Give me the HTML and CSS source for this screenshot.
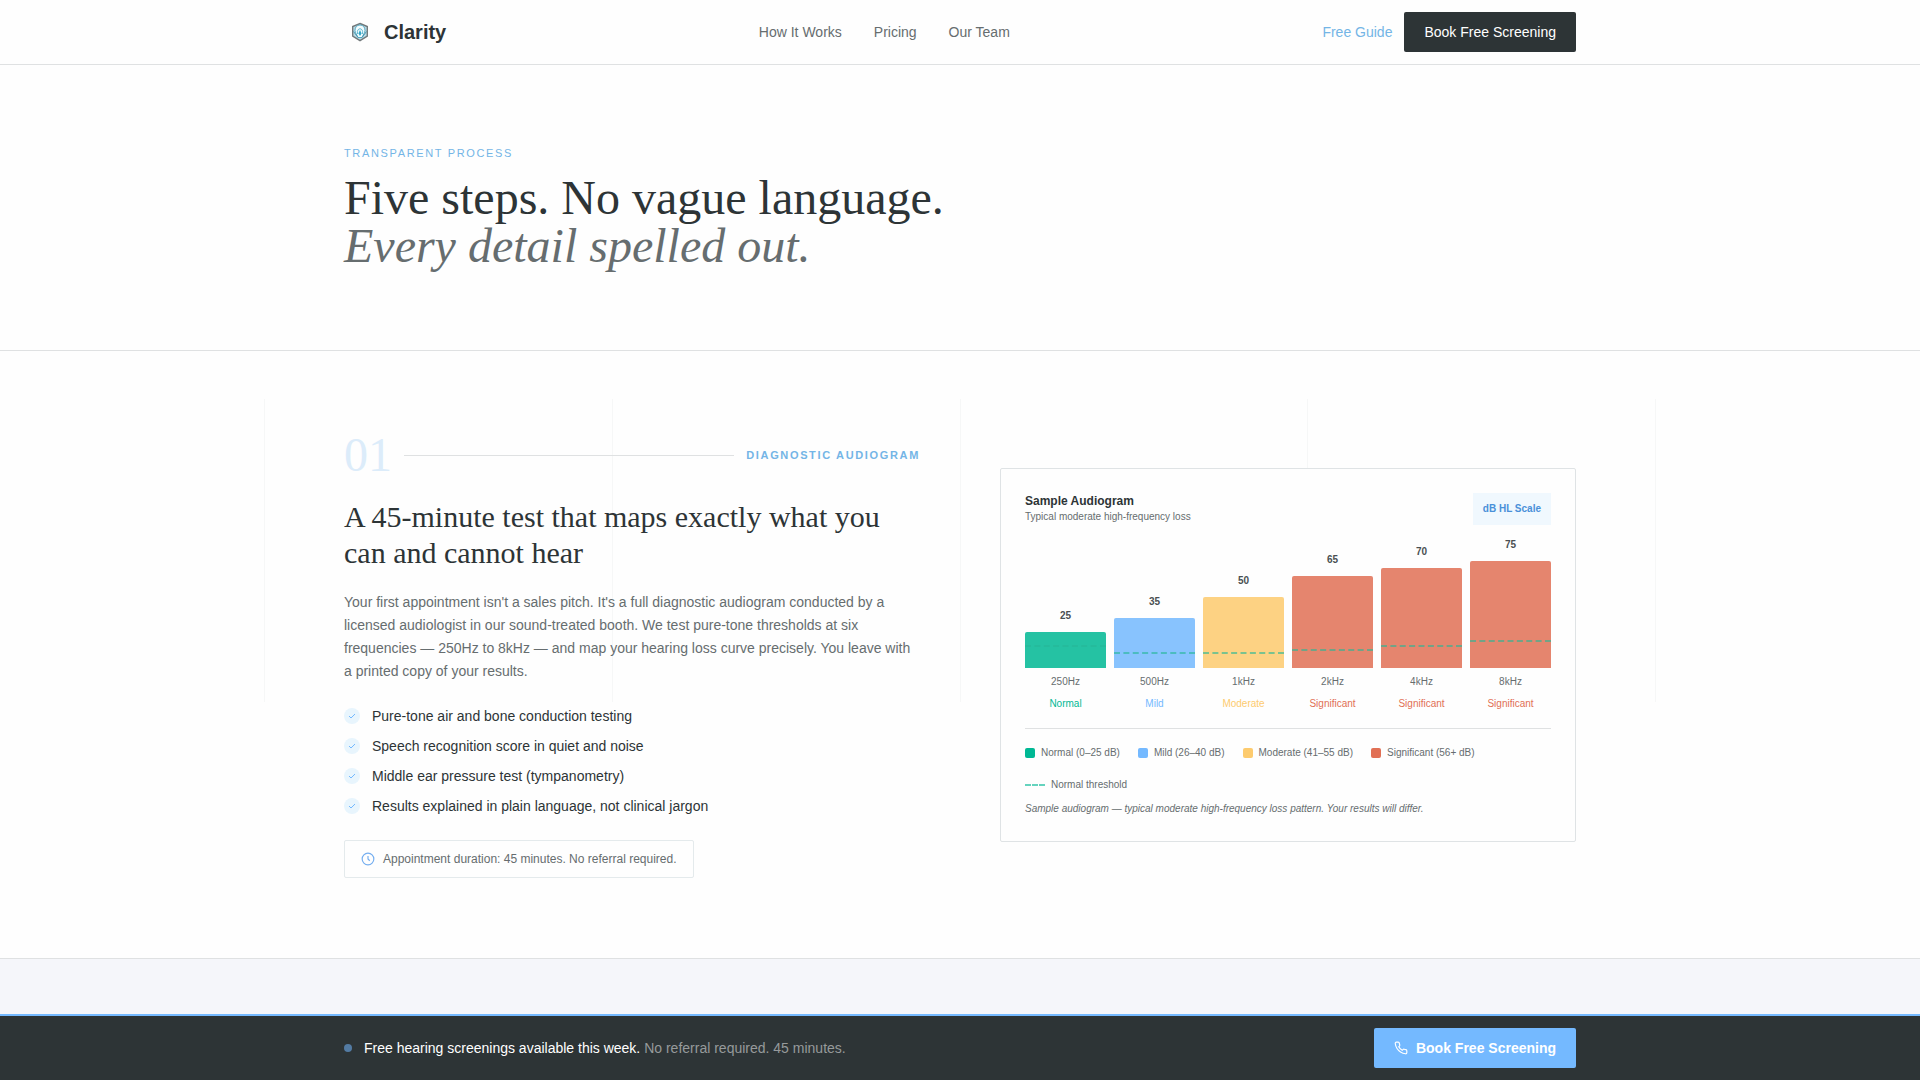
FILE: index.html
```html
<!DOCTYPE html>
<html lang="en">
<head>
    <meta charset="UTF-8">
    <meta name="viewport" content="width=device-width, initial-scale=1.0">
    <title>Clarity - How It Works</title>
    <link rel="stylesheet" href="styles.css">
</head>
<body>
    <header class="site-header">
        <div class="container header-inner">
            <a href="#" class="logo">
                <svg class="logo-mark" viewBox="0 0 32 32" aria-hidden="true">
                    <path d="M16 7.500l7.300 3v9.500L16 24.700 8.700 20v-9.500z" fill="#b9dbe6" stroke="#73797b" stroke-width="1.400"/>
                    <path d="M11 14.500c0-3.500 2-5.500 5-5.500s5 2 5 5.500c0 2.500-2 4-3 7h-4c-1-3-3-4.500-3-7z" fill="#f2fcfe" stroke="#5aa9c2" stroke-width="1"/>
                    <path d="M13.500 18c-1.500-7 6.500-7 5 0" fill="none" stroke="#63b9d2" stroke-width="1"/>
                    <path d="M16 14l1.600 3.500L16 20l-1.600-2.500z" fill="#35a7c7"/>
                    <path d="M9.500 15.500l4.500 6M22.500 15.500l-4.500 6" fill="none" stroke="#4c98b0" stroke-width="1"/>
                </svg>
                <span>Clarity</span>
            </a>
            <nav class="main-nav">
                <a href="#steps">How It Works</a>
                <a href="#pricing">Pricing</a>
                <a href="#team">Our Team</a>
            </nav>
            <div class="header-actions">
                <a href="#guide" class="guide-link">Free Guide</a>
                <a href="#book" class="btn btn-dark">Book Free Screening</a>
            </div>
        </div>
    </header>

    <main>
        <section class="hero">
            <div class="container">
                <p class="eyebrow">Transparent Process</p>
                <h1>Five steps. No vague language.<br><em>Every detail spelled out.</em></h1>
            </div>
        </section>

        <section class="step" id="steps">
            <div class="grid-lines" aria-hidden="true"><i></i><i></i><i></i><i></i><i></i></div>
            <div class="container step-grid">
                <div class="step-text">
                    <div class="step-head">
                        <span class="step-number">01</span>
                        <span class="step-rule"></span>
                        <span class="step-label">Diagnostic Audiogram</span>
                    </div>
                    <h2>A 45-minute test that maps exactly what you can and cannot hear</h2>
                    <p class="step-body">Your first appointment isn't a sales pitch. It's a full diagnostic audiogram conducted by a licensed audiologist in our sound-treated booth. We test pure-tone thresholds at six frequencies — 250Hz to 8kHz — and map your hearing loss curve precisely. You leave with a printed copy of your results.</p>
                    <ul class="checks">
                        <li><svg viewBox="0 0 16 16" aria-hidden="true"><circle cx="8" cy="8" r="8"/><path d="M5 8l2 2 4-4"/></svg>Pure-tone air and bone conduction testing</li>
                        <li><svg viewBox="0 0 16 16" aria-hidden="true"><circle cx="8" cy="8" r="8"/><path d="M5 8l2 2 4-4"/></svg>Speech recognition score in quiet and noise</li>
                        <li><svg viewBox="0 0 16 16" aria-hidden="true"><circle cx="8" cy="8" r="8"/><path d="M5 8l2 2 4-4"/></svg>Middle ear pressure test (tympanometry)</li>
                        <li><svg viewBox="0 0 16 16" aria-hidden="true"><circle cx="8" cy="8" r="8"/><path d="M5 8l2 2 4-4"/></svg>Results explained in plain language, not clinical jargon</li>
                    </ul>
                    <div class="note">
                        <svg viewBox="0 0 24 24" aria-hidden="true"><circle cx="12" cy="12" r="10"/><path d="M12 7v5l3 3"/></svg>
                        <span>Appointment duration: 45 minutes. No referral required.</span>
                    </div>
                </div>

                <div class="card">
                    <div class="card-head">
                        <div>
                            <h3>Sample Audiogram</h3>
                            <p>Typical moderate high-frequency loss</p>
                        </div>
                        <span class="chip">dB HL Scale</span>
                    </div>

                    <div class="chart">
                        <div class="col normal">
                            <span class="value">25</span>
                            <div class="bar" style="height: 36px"><span class="threshold" style="bottom: 21px"></span></div>
                            <span class="freq">250Hz</span>
                            <span class="status">Normal</span>
                        </div>
                        <div class="col mild">
                            <span class="value">35</span>
                            <div class="bar" style="height: 50px"><span class="threshold" style="bottom: 14px"></span></div>
                            <span class="freq">500Hz</span>
                            <span class="status">Mild</span>
                        </div>
                        <div class="col moderate">
                            <span class="value">50</span>
                            <div class="bar" style="height: 71px"><span class="threshold" style="bottom: 14px"></span></div>
                            <span class="freq">1kHz</span>
                            <span class="status">Moderate</span>
                        </div>
                        <div class="col significant">
                            <span class="value">65</span>
                            <div class="bar" style="height: 92px"><span class="threshold" style="bottom: 17px"></span></div>
                            <span class="freq">2kHz</span>
                            <span class="status">Significant</span>
                        </div>
                        <div class="col significant">
                            <span class="value">70</span>
                            <div class="bar" style="height: 100px"><span class="threshold" style="bottom: 21px"></span></div>
                            <span class="freq">4kHz</span>
                            <span class="status">Significant</span>
                        </div>
                        <div class="col significant">
                            <span class="value">75</span>
                            <div class="bar" style="height: 107px"><span class="threshold" style="bottom: 26px"></span></div>
                            <span class="freq">8kHz</span>
                            <span class="status">Significant</span>
                        </div>
                    </div>

                    <ul class="legend">
                        <li class="normal"><span class="swatch"></span>Normal (0–25 dB)</li>
                        <li class="mild"><span class="swatch"></span>Mild (26–40 dB)</li>
                        <li class="moderate"><span class="swatch"></span>Moderate (41–55 dB)</li>
                        <li class="significant"><span class="swatch"></span>Significant (56+ dB)</li>
                        <li><span class="dash"></span>Normal threshold</li>
                    </ul>
                    <p class="caption">Sample audiogram — typical moderate high-frequency loss pattern. Your results will differ.</p>
                </div>
            </div>
        </section>

        <section class="next-step"></section>
    </main>

    <div class="cta-bar">
        <div class="container cta-inner">
            <p class="cta-text"><span class="dot"></span><span>Free hearing screenings available this week. <span class="muted">No referral required. 45 minutes.</span></span></p>
            <a href="#book" class="btn btn-blue">
                <svg viewBox="0 0 24 24" aria-hidden="true"><path d="M22 16.920v3a2 2 0 0 1-2.180 2 19.790 19.790 0 0 1-8.630-3.070 19.500 19.500 0 0 1-6-6 19.790 19.790 0 0 1-3.070-8.670A2 2 0 0 1 4.110 2h3a2 2 0 0 1 2 1.720c.127.960.361 1.903.700 2.810a2 2 0 0 1-.450 2.110L8.090 9.910a16 16 0 0 0 6 6l1.270-1.270a2 2 0 0 1 2.110-.450c.907.339 1.850.573 2.810.700A2 2 0 0 1 22 16.920z"/></svg>
                Book Free Screening
            </a>
        </div>
    </div>
</body>
</html>
```
FILE: styles.css
```css
/* General styles */
* {
    box-sizing: border-box;
    margin: 0;
    padding: 0;
}

body {
    min-height: 100vh;
    display: flex;
    flex-direction: column;
    font-family: "Liberation Sans", Arial, sans-serif;
    font-size: 14px;
    line-height: 20px;
    color: #2d3436;
    background-color: #fefefe;
}

main {
    flex: 1;
    display: flex;
    flex-direction: column;
}

a {
    text-decoration: none;
    color: inherit;
}

ul {
    list-style: none;
}

.container {
    width: 100%;
    max-width: 1280px;
    margin: 0 auto;
    padding: 0 24px;
}

.btn {
    display: inline-flex;
    align-items: center;
    gap: 8px;
    padding: 10px 20px;
    border-radius: 2px;
    color: #fff;
}

.btn-dark {
    background-color: #2d3436;
}

.btn-blue {
    background-color: #74b9ff;
    font-weight: bold;
}

.btn-blue svg {
    width: 14px;
    height: 14px;
    fill: none;
    stroke: #fff;
    stroke-width: 2;
}

/* Header */
.site-header {
    position: sticky;
    top: 0;
    z-index: 10;
    background-color: #fefefe;
    border-bottom: 1px solid #dfe1e2;
}

.header-inner {
    min-height: 64px;
    display: flex;
    justify-content: space-between;
    align-items: center;
}

.logo {
    display: flex;
    align-items: center;
    gap: 8px;
    font-size: 20px;
    font-weight: bold;
}

.logo-mark {
    width: 32px;
    height: 32px;
}

.main-nav {
    display: flex;
    gap: 32px;
    color: #666d6f;
}

.header-actions {
    display: flex;
    align-items: center;
    gap: 12px;
}

.guide-link {
    color: #74b5e6;
}

/* Hero */
.hero {
    padding: 80px 0;
    border-bottom: 1px solid #dfe1e2;
}

.eyebrow {
    margin-bottom: 12px;
    font-size: 11px;
    line-height: 17px;
    letter-spacing: 0.15em;
    text-transform: uppercase;
    color: #74b5e6;
}

h1,
h2,
.step-number {
    font-family: "Liberation Serif", "Times New Roman", serif;
    font-weight: normal;
}

h1 {
    font-size: 48px;
    line-height: 48px;
}

h1 em {
    color: #666d6f;
}

/* Step */
.step {
    position: relative;
    padding: 80px 0;
    border-bottom: 1px solid #dfe1e2;
}

.grid-lines {
    position: absolute;
    inset: 48px 264px 256px;
    display: flex;
    justify-content: space-between;
}

.grid-lines i {
    width: 1px;
    background-color: #f6f7f7;
}

.step-grid {
    position: relative;
    display: grid;
    grid-template-columns: 1fr 1fr;
    gap: 80px;
    align-items: center;
}

.step-head {
    display: flex;
    align-items: center;
    gap: 12px;
    margin-bottom: 20px;
}

.step-number {
    font-size: 48px;
    line-height: 48px;
    color: #dcecfa;
}

.step-rule {
    flex: 1;
    height: 1px;
    background-color: #dfe1e2;
}

.step-label {
    font-size: 11px;
    font-weight: bold;
    letter-spacing: 0.15em;
    text-transform: uppercase;
    color: #74b5e6;
}

h2 {
    margin-bottom: 20px;
    font-size: 30px;
    line-height: 36px;
}

.step-body {
    margin-bottom: 23px;
    line-height: 23px;
    color: #666d6f;
}

.checks {
    display: flex;
    flex-direction: column;
    gap: 10px;
    margin-bottom: 24px;
}

.checks li {
    display: flex;
    align-items: center;
    gap: 12px;
}

.checks svg {
    width: 16px;
    height: 16px;
    fill: none;
    stroke: #74b9ff;
}

.checks circle {
    fill: #e8f5fd;
    stroke: none;
}

.note {
    display: flex;
    width: fit-content;
    align-items: center;
    gap: 8px;
    padding: 10px 16px;
    border: 1px solid #e4eaec;
    border-radius: 2px;
    font-size: 12px;
    line-height: 16px;
    color: #666d6f;
}

.note svg {
    width: 14px;
    height: 14px;
    fill: none;
    stroke: #74aef0;
    stroke-width: 2;
}

/* Audiogram card */
.card {
    padding: 24px;
    border: 1px solid #dfe3e5;
    border-radius: 2px;
    background-color: #fefefe;
    font-size: 10px;
    line-height: 16px;
    color: #666d6f;
}

.card-head {
    display: flex;
    justify-content: space-between;
    align-items: flex-start;
    margin-bottom: 12px;
}

.card h3 {
    font-size: 12px;
    line-height: 16px;
    color: #2d3436;
}

.chip {
    padding: 8px 10px;
    background-color: #f0f8fe;
    font-weight: bold;
    color: #4a90d9;
}

.chart {
    display: flex;
    align-items: flex-end;
    gap: 8px;
    padding-bottom: 16px;
    border-bottom: 1px solid #dfe1e2;
}

.col {
    flex: 1;
    display: flex;
    flex-direction: column;
    text-align: center;
}

.value {
    margin-bottom: 8px;
    font-weight: bold;
    color: #4a5052;
}

.bar {
    position: relative;
    border-radius: 2px 2px 0 0;
    opacity: 0.85;
}

.normal .bar,
.normal .swatch {
    background-color: #00b894;
}

.mild .bar,
.mild .swatch {
    background-color: #74b9ff;
}

.moderate .bar,
.moderate .swatch {
    background-color: #fdcb6e;
}

.significant .bar,
.significant .swatch {
    background-color: #e17055;
}

.threshold {
    position: absolute;
    left: 0;
    right: 0;
    border-top: 2px dashed #00ac86;
    opacity: 0.6;
}

.freq {
    margin: 6px 0;
}

.normal .status {
    color: #00b894;
}

.mild .status {
    color: #74b9ff;
}

.moderate .status {
    color: #fdcb6e;
}

.significant .status {
    color: #e17055;
}

.legend {
    display: flex;
    flex-wrap: wrap;
    gap: 16px 18px;
    padding-top: 16px;
    margin-bottom: 8px;
}

.legend li {
    display: flex;
    align-items: center;
    gap: 6px;
}

.swatch {
    width: 10px;
    height: 10px;
    border-radius: 2px;
}

.dash {
    width: 20px;
    border-top: 2px dashed #00b894;
    opacity: 0.6;
}

.caption {
    font-style: italic;
}

/* Next step */
.next-step {
    flex: 1;
    background-color: #f5f6fa;
}

/* Bottom bar */
.cta-bar {
    position: sticky;
    bottom: 0;
    padding: 12px 0;
    border-top: 2px solid #74b9ff;
    background-color: #2d3436;
    color: #fff;
}

.cta-inner {
    display: flex;
    justify-content: space-between;
    align-items: center;
}

.cta-text {
    display: flex;
    align-items: center;
    gap: 12px;
}

.dot {
    width: 8px;
    height: 8px;
    border-radius: 50%;
    background-color: #537ba3;
}

.muted {
    color: #969a9b;
}
```
